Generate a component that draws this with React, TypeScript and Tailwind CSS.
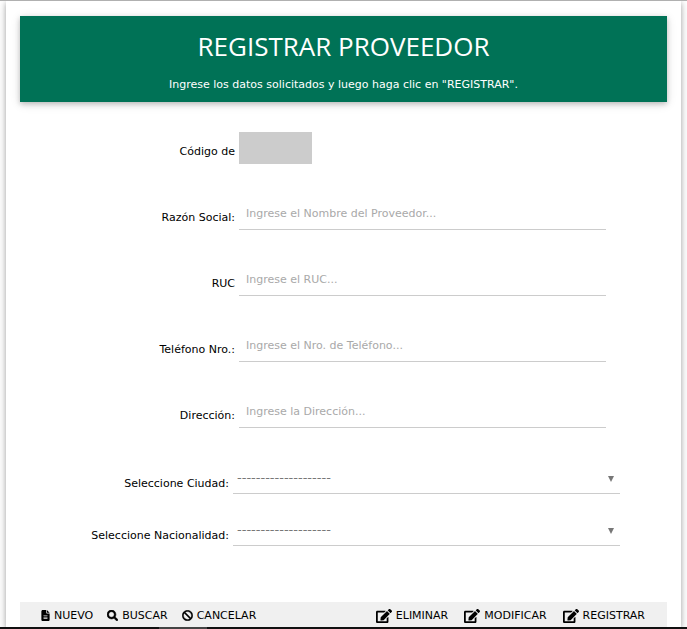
import React from "react";
import { FaBan, FaEdit, FaSearch } from "react-icons/fa";
import { FaFileLines } from "react-icons/fa6";

const fields = [
  { id: "razon", label: "Razón Social:", placeholder: "Ingrese el Nombre del Proveedor..." },
  { id: "ruc", label: "RUC", placeholder: "Ingrese el RUC..." },
  { id: "telefono", label: "Teléfono Nro.:", placeholder: "Ingrese el Nro. de Teléfono..." },
  { id: "direccion", label: "Dirección:", placeholder: "Ingrese la Dirección..." },
];

const selects = [
  { id: "ciudad", label: "Seleccione Ciudad:" },
  { id: "nacionalidad", label: "Seleccione Nacionalidad:" },
];

function Action({ icon, text }: { icon: React.ReactNode; text: string }) {
  return (
    <button type="button" className="flex items-center gap-1 whitespace-nowrap">
      {icon}
      {text}
    </button>
  );
}

export default function App() {
  return (
    <div className="overflow-hidden border-t border-[#b0b0b0] bg-white font-['Verdana','DejaVu_Sans',sans-serif] text-[11px] leading-4 text-black">
      <form className="mx-1.5 bg-white px-3.5 pt-[15px] shadow-[0_2px_5px_0_rgba(0,0,0,0.26),0_2px_10px_0_rgba(0,0,0,0.16)]">
        <header className="bg-[#007256] pt-3 pb-[9px] text-center text-white shadow-[0_2px_5px_0_rgba(0,0,0,0.2),0_2px_10px_0_rgba(0,0,0,0.12)]">
          <h1 className="font-['Segoe_UI','Open_Sans',sans-serif] text-[26px] leading-9">REGISTRAR PROVEEDOR</h1>
          <p className="pt-[13px]">Ingrese los datos solicitados y luego haga clic en "REGISTRAR".</p>
        </header>

        <div className="mt-[30px] flex flex-col gap-[34px] pr-[61px]">
          <div className="flex items-end gap-1">
            <label htmlFor="codigo" className="w-[215px] pb-1 text-right">Código de</label>
            <input id="codigo" disabled className="h-8 w-[73px] bg-[#cccccc]" />
          </div>
          {fields.map((f) => (
            <div key={f.id} className="flex items-end gap-1">
              <label htmlFor={f.id} className="w-[215px] pb-1 text-right">{f.label}</label>
              <input
                id={f.id}
                placeholder={f.placeholder}
                className="h-8 min-w-0 flex-1 border-b border-[#cccccc] px-[7px] outline-none placeholder:text-[#a9a9a9]"
              />
            </div>
          ))}
        </div>

        <div className="mt-[34px] flex flex-col gap-5 pr-[47px]">
          {selects.map((s) => (
            <div key={s.id} className="flex items-end gap-1">
              <label htmlFor={s.id} className="w-[209px] pb-0.5 text-right">{s.label}</label>
              <div className="relative min-w-0 flex-1">
                <select
                  id={s.id}
                  className="block h-8 w-full appearance-none border-b border-[#cccccc] px-1 text-[13px] text-[#777777] outline-none"
                >
                  <option>--------------------</option>
                </select>
                <svg viewBox="0 0 6 6" className="pointer-events-none absolute top-3.5 right-1.5 h-1.5 w-1.5 fill-[#777777]">
                  <path d="M0 0h6L3 6z" />
                </svg>
              </div>
            </div>
          ))}
        </div>

        <footer className="mt-14 flex h-[25px] items-center justify-between bg-[#f0f0f0] pt-0.5 pr-[22px] pl-[21px]">
          <div className="flex gap-3.5">
            <Action icon={<FaFileLines className="h-[11px] w-[9px]" />} text="NUEVO" />
            <Action icon={<FaSearch className="h-[11px] w-[11px] stroke-black stroke-[24]" />} text="BUSCAR" />
            <Action icon={<FaBan className="h-[11px] w-[11px] stroke-black stroke-[16]" />} text="CANCELAR" />
          </div>
          <div className="flex gap-4">
            <Action icon={<FaEdit className="h-4 w-4" />} text="ELIMINAR" />
            <Action icon={<FaEdit className="h-4 w-4" />} text="MODIFICAR" />
            <Action icon={<FaEdit className="h-4 w-4" />} text="REGISTRAR" />
          </div>
        </footer>
      </form>
      <div className="relative flex h-0.5 bg-[#111111] pl-[159px]">
        <div className="w-12 bg-[#444444]" />
      </div>
    </div>
  );
}
